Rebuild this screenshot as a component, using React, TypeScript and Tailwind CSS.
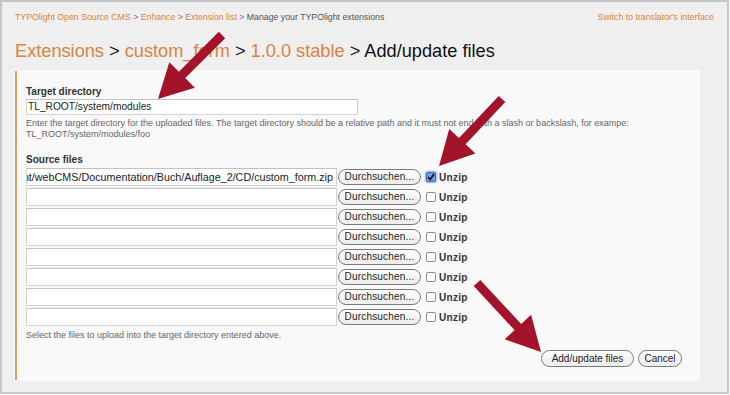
import React from "react";

const F = { fontFamily: '"Liberation Sans", Arial, sans-serif' };

function Arrow({ x1, y1, x2, y2 }: { x1: number; y1: number; x2: number; y2: number }) {
  const dx = x2 - x1;
  const dy = y2 - y1;
  const L = Math.sqrt(dx * dx + dy * dy);
  const ux = dx / L;
  const uy = dy / L;
  const px = -uy;
  const py = ux;
  const hl = 34;
  const hw = 18;
  const sw = 4.5;
  const bx = x2 - ux * hl;
  const by = y2 - uy * hl;
  const pts = [
    [x1 + px * sw, y1 + py * sw],
    [bx + px * sw, by + py * sw],
    [bx + px * hw, by + py * hw],
    [x2, y2],
    [bx - px * hw, by - py * hw],
    [bx - px * sw, by - py * sw],
    [x1 - px * sw, y1 - py * sw],
  ]
    .map((p) => `${p[0].toFixed(1)},${p[1].toFixed(1)}`)
    .join(" ");
  return <polygon points={pts} fill="#a3132a" />;
}

function FileRow({ value, checked }: { value?: string; checked?: boolean }) {
  return (
    <div className="flex items-center h-[18px]">
      <div className="w-[311px] h-[18px] bg-white border border-[#d3d3d3] border-t-[#c2c2c2] flex items-center justify-end overflow-hidden whitespace-nowrap text-[10.75px] text-[#222] pr-[3px]">
        {value}
      </div>
      <button className="ml-[1px] w-[83px] h-[16px] rounded-full border border-[#7a7a7a] bg-gradient-to-b from-white to-[#ececec] text-[10px] leading-[14px] text-[#222] tracking-[0.2px]">
        Durchsuchen...
      </button>
      {checked ? (
        <span className="ml-[5px] w-[10px] h-[10px] rounded-[2px] border border-[#3f6fb8] bg-[#6d9ae0] shadow-[0_0_2px_1px_#8fb3ea] flex items-center justify-center">
          <svg width="8" height="8" viewBox="0 0 8 8">
            <path d="M1 4 L3.2 6.5 L7 1" stroke="#111" strokeWidth="1.6" fill="none" />
          </svg>
        </span>
      ) : (
        <span className="ml-[5px] w-[10px] h-[10px] rounded-[2px] border border-[#8c8c8c] bg-white" />
      )}
      <span className="ml-[3px] text-[10px] font-bold text-[#333] tracking-[0.3px]">Unzip</span>
    </div>
  );
}

export default function App() {
  return (
    <div className="w-[730px] h-[395px] bg-white" style={F}>
      <div className="relative w-[729px] h-[394px] border-2 border-[#c6c6c6] bg-[#efefef] flex flex-col">
        <div className="mt-[9px] h-[12px] pl-[13px] pr-[13px] flex items-center justify-between text-[8.75px] leading-[12px]">
          <div className="whitespace-nowrap">
            <span className="text-[#d9843f]">TYPOlight Open Source CMS</span>
            <span className="text-[#777]"> &gt; </span>
            <span className="text-[#d9843f]">Enhance</span>
            <span className="text-[#777]"> &gt; </span>
            <span className="text-[#d9843f]">Extension list</span>
            <span className="text-[#777]"> &gt; </span>
            <span className="text-[#555]">Manage your TYPOlight extensions</span>
          </div>
          <div className="text-[#d9843f] whitespace-nowrap">Switch to translator's interface</div>
        </div>
        <div className="mt-[17px] h-[22px] pl-[13px] text-[18.2px] leading-[22px] whitespace-nowrap">
          <span className="text-[#d9843f]">Extensions</span>
          <span className="text-[#222]"> &gt; </span>
          <span className="text-[#d9843f]">custom_form</span>
          <span className="text-[#222]"> &gt; </span>
          <span className="text-[#d9843f]">1.0.0 stable</span>
          <span className="text-[#222]"> &gt; </span>
          <span className="text-[#111]">Add/update files</span>
        </div>
        <div className="mt-[8px] ml-[12px] w-[686px] h-[311px] bg-[#f9f9f9] pl-[1px] py-[1px]">
          <div className="h-full border-l-2 border-[#dfa05c] pl-[9px] pt-[15px] flex flex-col">
            <div className="h-[12px] text-[10px] leading-[12px] font-bold text-[#333]">Target directory</div>
            <div className="mt-[1px] w-[332px] h-[16px] bg-white border border-[#d3d3d3] border-t-[#c2c2c2] flex items-center pl-[1px] text-[10.2px] text-[#222]">
              TL_ROOT/system/modules
            </div>
            <div className="mt-[3px] text-[9px] leading-[11px] text-[#666] whitespace-nowrap">
              Enter the target directory for the uploaded files. The target directory should be a relative path and it must not end with a slash or backslash, for exampe:
              <br />
              TL_ROOT/system/modules/foo
            </div>
            <div className="mt-[14px] h-[12px] text-[10px] leading-[12px] font-bold text-[#333]">Source files</div>
            <div className="mt-[2px] flex flex-col gap-[2px]">
              <FileRow value="ment/webCMS/Documentation/Buch/Auflage_2/CD/custom_form.zip" checked />
              <FileRow />
              <FileRow />
              <FileRow />
              <FileRow />
              <FileRow />
              <FileRow />
              <FileRow />
            </div>
            <div className="mt-[4px] text-[9px] leading-[11px] text-[#666]">
              Select the files to upload into the target directory entered above.
            </div>
            <div className="mt-[9px] flex justify-end pr-[18px] gap-[4px]">
              <button className="h-[17px] w-[93px] rounded-full border border-[#7a7a7a] bg-gradient-to-b from-white to-[#ececec] text-[10px] leading-[15px] text-[#222]">
                Add/update files
              </button>
              <button className="h-[17px] w-[44px] rounded-full border border-[#7a7a7a] bg-gradient-to-b from-white to-[#ececec] text-[10px] leading-[15px] text-[#222]">
                Cancel
              </button>
            </div>
          </div>
        </div>
        <svg className="absolute left-[-2px] top-[-2px] pointer-events-none" width="730" height="395">
          <Arrow x1={222} y1={35} x2={158} y2={99} />
          <Arrow x1={502} y1={99} x2={439} y2={166} />
          <Arrow x1={477} y1={283} x2={541} y2={352} />
        </svg>
      </div>
    </div>
  );
}
